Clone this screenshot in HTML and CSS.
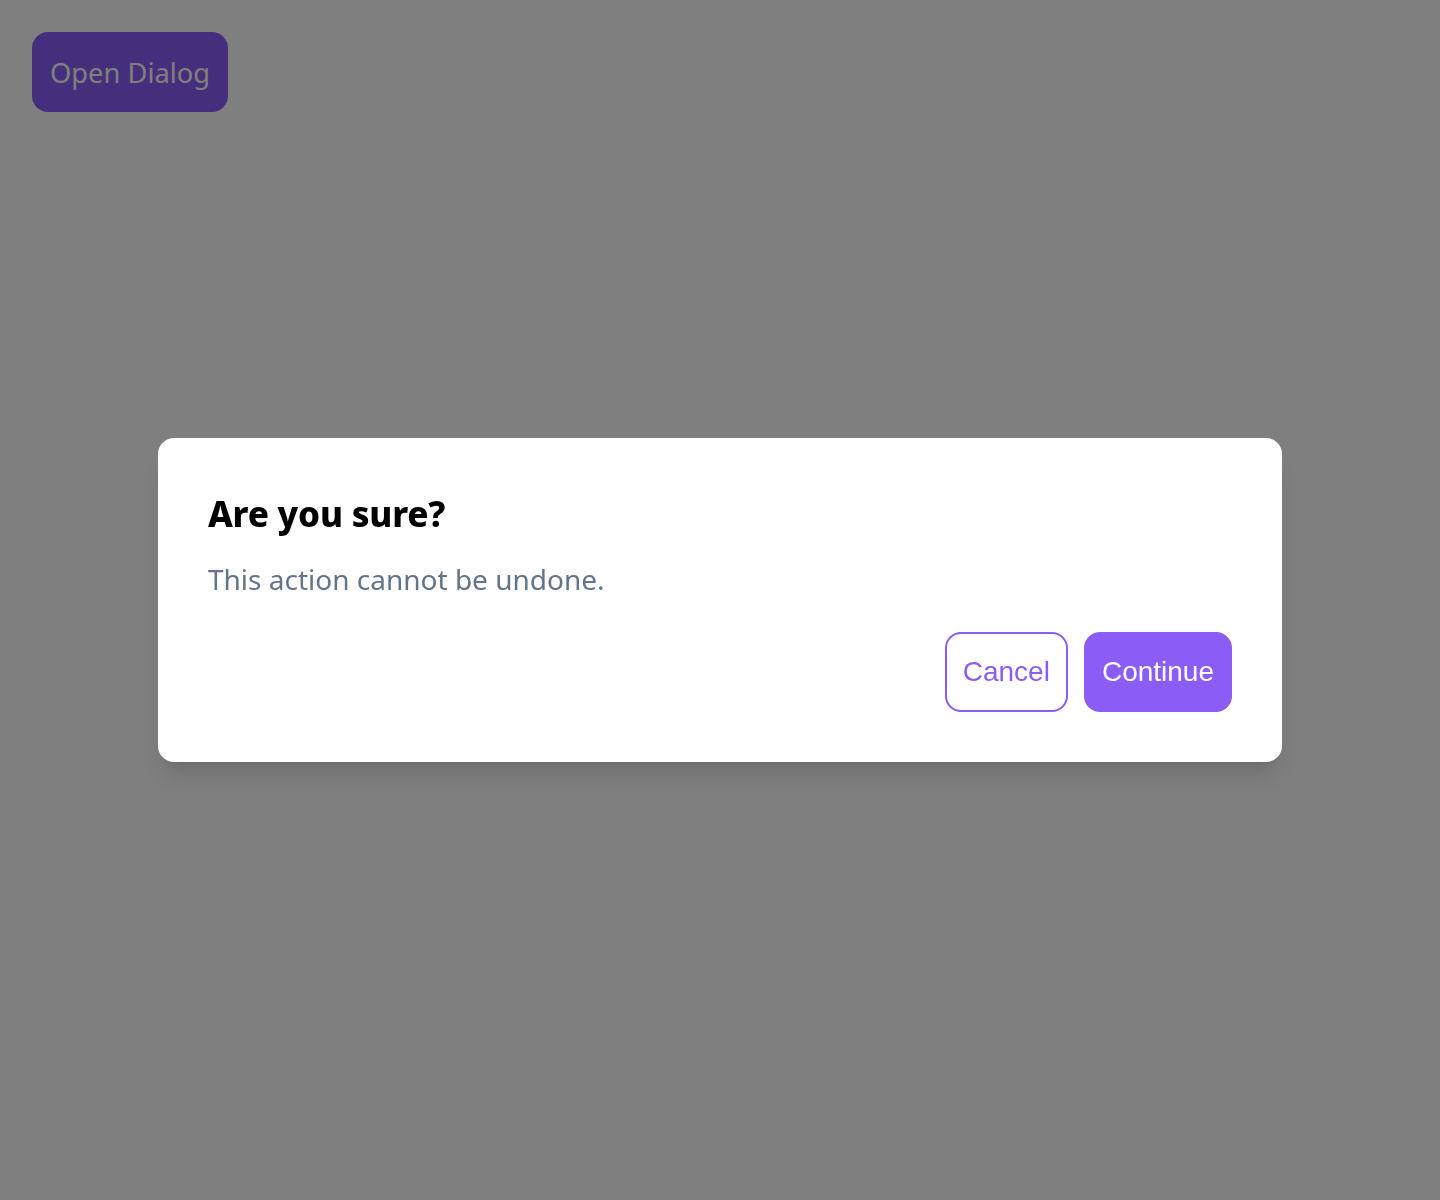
FILE: index.html
```html
<!DOCTYPE html>
<html lang="en">
<head>
<meta charset="utf-8">
<title>Dialog</title>
<link rel="stylesheet" href="styles.css">
</head>
<body>
<div class="page">
  <button class="btn btn-primary">Open Dialog</button>
</div>
<div class="overlay">
  <div class="dialog" role="alertdialog">
    <h2 class="dialog-title">Are you sure?</h2>
    <p class="dialog-text">This action cannot be undone.</p>
    <div class="dialog-actions">
      <button class="btn btn-outline">Cancel</button>
      <button class="btn btn-solid">Continue</button>
    </div>
  </div>
</div>
</body>
</html>
```

FILE: styles.css
```css
* { box-sizing: border-box; }
html, body { margin: 0; padding: 0; }
body {
  width: 1440px;
  height: 1200px;
  background: #ffffff;
  font-family: "Noto Sans", sans-serif;
  overflow: hidden;
}
.page {
  padding: 32px;
}
.btn {
  height: 80px;
  padding: 0 16px;
  border: 2px solid transparent;
  border-radius: 16px;
  font-size: 28px;
  cursor: pointer;
}
.btn-primary {
  background: #8b5cf6;
  color: #ffffff;
  font-family: "Noto Sans", sans-serif;
  font-size: 27.3px;
}
.overlay {
  position: fixed;
  inset: 0;
  background: rgba(0, 0, 0, 0.5);
  display: flex;
  align-items: center;
  justify-content: center;
}
.dialog {
  width: 1124px;
  background: #ffffff;
  border-radius: 16px;
  padding: 50px;
  box-shadow: 0 20px 25px -5px rgba(0,0,0,0.1), 0 8px 10px -6px rgba(0,0,0,0.1);
}
.dialog-title {
  margin: 0;
  font-size: 35px;
  font-weight: 800;
  line-height: 52px;
  color: #000000;
  letter-spacing: -0.2px;
}
.dialog-text {
  margin: 18px 0 0;
  font-size: 28px;
  line-height: 42px;
  color: #64748b;
}
.dialog-actions {
  margin-top: 32px;
  display: flex;
  justify-content: flex-end;
  gap: 16px;
}
.btn-outline, .btn-solid {
  font-family: "Liberation Sans", Arial, sans-serif;
}
.btn-outline {
  background: #ffffff;
  border-color: #8b5cf6;
  color: #8b5cf6;
}
.btn-solid {
  background: #8b5cf6;
  color: #ffffff;
}
```
